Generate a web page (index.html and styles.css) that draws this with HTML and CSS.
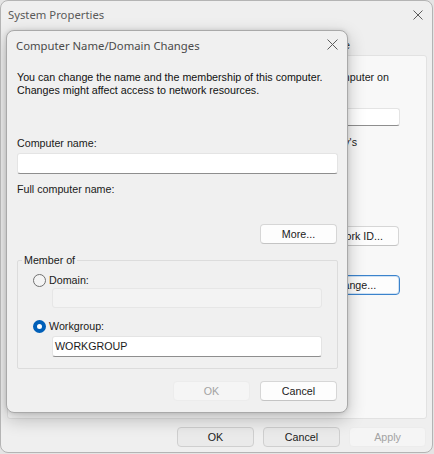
FILE: index.html
```html
<!DOCTYPE html>
<html>
<head>
<meta charset="utf-8">
<link rel="stylesheet" href="styles.css">
</head>
<body>
<div class="window">
  <div class="titlebar">
    <span class="title">System Properties</span>
    <svg class="close outer-close" width="10" height="10" viewBox="0 0 10 10"><path d="M0.5 0.5L9.5 9.5M9.5 0.5L0.5 9.5" stroke="#5c5c5c" stroke-width="1" fill="none"/></svg>
  </div>
  <div class="tabs">
    <span class="tab">Remote</span>
  </div>
  <div class="panel">
    <p class="line line-end l1">Windows uses the following information to identify your computer on</p>
    <div class="line-gap"></div>
    <div class="desc-row">
      <div class="field desc-field"></div>
    </div>
    <p class="line line-end l3">For example: "Kitchen Computer" or "Mary's</p>
    <div class="action-row netid-row">
      <button class="btn wide-btn">Network ID...</button>
    </div>
    <div class="action-row change-row">
      <button class="btn wide-btn btn-default">Change...</button>
    </div>
  </div>
  <div class="footer">
    <button class="btn btn-dim">OK</button>
    <button class="btn btn-dim">Cancel</button>
    <button class="btn btn-disabled">Apply</button>
  </div>

  <div class="dialog">
    <div class="dlg-titlebar">
      <span class="dlg-title">Computer Name/Domain Changes</span>
      <svg class="close dlg-close" width="11" height="11" viewBox="0 0 11 11"><path d="M0.5 0.5L10.5 10.5M10.5 0.5L0.5 10.5" stroke="#5c5c5c" stroke-width="1" fill="none"/></svg>
    </div>
    <div class="dlg-body">
      <p class="desc">You can change the name and the membership of this computer.<br>Changes might affect access to network resources.</p>
      <p class="dlg-label cn-label">Computer name:</p>
      <div class="field cn-field"></div>
      <p class="dlg-label full-label">Full computer name:</p>
      <div class="more-row"><button class="btn more-btn">More...</button></div>
      <fieldset class="group">
        <legend class="group-legend">Member of</legend>
        <div class="group-inner">
          <div class="radio-row domain-row"><span class="radio"></span><span>Domain:</span></div>
          <div class="field field-disabled indent domain-field"></div>
          <div class="radio-row wg-radio-row"><span class="radio radio-on"></span><span>Workgroup:</span></div>
          <div class="field indent wg-field">WORKGROUP</div>
        </div>
      </fieldset>
      <div class="dlg-buttons">
        <button class="btn btn-disabled">OK</button>
        <button class="btn">Cancel</button>
      </div>
    </div>
  </div>
</div>
</body>
</html>
```

FILE: styles.css
```css
html, body {
  margin: 0;
  padding: 0;
}
body {
  width: 434px;
  height: 454px;
  background: #e4e4e4;
  font-family: "Liberation Sans", Arial, sans-serif;
  font-size: 10.7px;
  color: #1a1a1a;
  overflow: hidden;
}
p { margin: 0; }

.window {
  position: relative;
  box-sizing: border-box;
  width: 433px;
  height: 453px;
  border: 1px solid #b4b4b4;
  border-radius: 8px;
  background: #efefef;
  display: flex;
  flex-direction: column;
  overflow: hidden;
}

.titlebar {
  height: 29px;
  flex: none;
  display: flex;
  align-items: center;
  justify-content: space-between;
  padding: 0 9px 0 7px;
}
.title {
  font-family: "Noto Sans", "Open Sans", sans-serif;
  font-size: 11.3px;
  color: #5a5a5a;
  margin-top: -3px;
}
.outer-close { margin-top: -2px; }

.tabs {
  height: 25px;
  flex: none;
  display: flex;
  justify-content: flex-end;
  align-items: flex-end;
  padding-right: 77px;
  box-sizing: border-box;
}
.tab {
  height: 20px;
  line-height: 20px;
  padding: 0 5px;
  color: #1a1a1a;
  white-space: nowrap;
}

.panel {
  flex: 1;
  margin: 0 5px 0 6px;
  background: #f8f8f8;
  border: 1px solid #e2e2e2;
  border-radius: 3px;
  padding: 14px 26px 0 12px;
  overflow: hidden;
}
.line {
  line-height: 14px;
  white-space: nowrap;
}
.line-end {
  text-align: right;
}
.l1 { padding-right: 11px; }
.line-gap { height: 14px; }
.l3 { padding-right: 43px; margin-top: 9px; }

.desc-row {
  margin-top: 10px;
  display: flex;
  align-items: center;
}
.field {
  box-sizing: border-box;
  background: #ffffff;
  border: 1px solid #e4e4e4;
  border-bottom-color: #8e8e8e;
  border-radius: 3px;
}
.desc-field {
  flex: 1;
  height: 18px;
}

.action-row {
  display: flex;
  justify-content: flex-end;
  align-items: center;
}
.netid-row { margin-top: 77px; padding-right: 1px; }
.change-row { margin-top: 29px; }

.btn {
  box-sizing: border-box;
  width: 77px;
  height: 20px;
  padding: 0;
  font-family: "Liberation Sans", Arial, sans-serif;
  font-size: 10.7px;
  color: #1a1a1a;
  background: #fdfdfd;
  border: 1px solid #d6d6d6;
  border-bottom-color: #c4c4c4;
  border-radius: 4px;
  flex: none;
}
.wide-btn { width: 94px; }
.btn-default {
  border: 1px solid #3b83cc;
  box-shadow: inset 0 0 0 1px #cfe1f3;
}
.btn-dim {
  background: #eaeaea;
  border-color: #cfcfcf;
}
.btn-disabled {
  background: #f5f5f5;
  border-color: #ececec;
  color: #a3a3a3;
}

.footer {
  flex: none;
  height: 33px;
  box-sizing: border-box;
  padding: 8px 6px 5px 0;
  display: flex;
  justify-content: flex-end;
  gap: 9px;
}

/* Overlay dialog */
.dialog {
  position: absolute;
  left: 5px;
  top: 29px;
  box-sizing: border-box;
  width: 342px;
  height: 383px;
  background: #f0f0f0;
  border: 1px solid #a9a9a9;
  border-radius: 8px;
  box-shadow: 0 6px 18px rgba(0, 0, 0, 0.24), 0 0 4px rgba(0, 0, 0, 0.12);
}
.dlg-titlebar {
  height: 30px;
  display: flex;
  justify-content: space-between;
  padding: 0 9px 0 9px;
}
.dlg-title {
  font-family: "Noto Sans", "Open Sans", sans-serif;
  font-size: 11.3px;
  color: #4a4a4a;
  line-height: 30px;
}
.dlg-close { margin-top: 8px; }

.dlg-body {
  padding: 0 9px 0 10px;
}
.desc {
  margin-top: 10px;
  line-height: 13px;
  color: #111;
}
.dlg-label {
  line-height: 13px;
}
.cn-label { margin-top: 40px; }
.cn-field {
  margin-top: 3px;
  height: 21px;
}
.full-label { margin-top: 9px; }
.more-row {
  margin-top: 28px;
  display: flex;
  justify-content: flex-end;
  padding-right: 1px;
}

.group {
  margin: 10px 0 0 0;
  padding: 0;
  border: 1px solid #dcdcdc;
  border-radius: 2px;
  min-width: 0;
}
.group-legend {
  margin-left: 4px;
  padding: 0 2px;
  line-height: 13px;
}
.group-inner {
  padding: 6px 15px 11px 15px;
}
.radio-row {
  display: flex;
  align-items: center;
  gap: 3px;
  height: 14px;
  line-height: 14px;
}
.radio {
  box-sizing: border-box;
  width: 13px;
  height: 13px;
  border-radius: 50%;
  border: 1px solid #707070;
  background: #f4f4f4;
  flex: none;
}
.radio-on {
  border: 4px solid #005fb8;
  background: #ffffff;
}
.indent {
  margin-left: 19px;
}
.domain-field {
  margin-top: 1px;
  height: 20px;
}
.field-disabled {
  background: #f3f3f3;
  border-color: #e6e6e6;
}
.wg-radio-row { margin-top: 11px; }
.wg-field {
  margin-top: 3px;
  height: 21px;
  line-height: 19px;
  padding-left: 2px;
  color: #1a1a1a;
}

.dlg-buttons {
  margin-top: 12px;
  display: flex;
  justify-content: flex-end;
  gap: 10px;
  padding-right: 1px;
}
```
